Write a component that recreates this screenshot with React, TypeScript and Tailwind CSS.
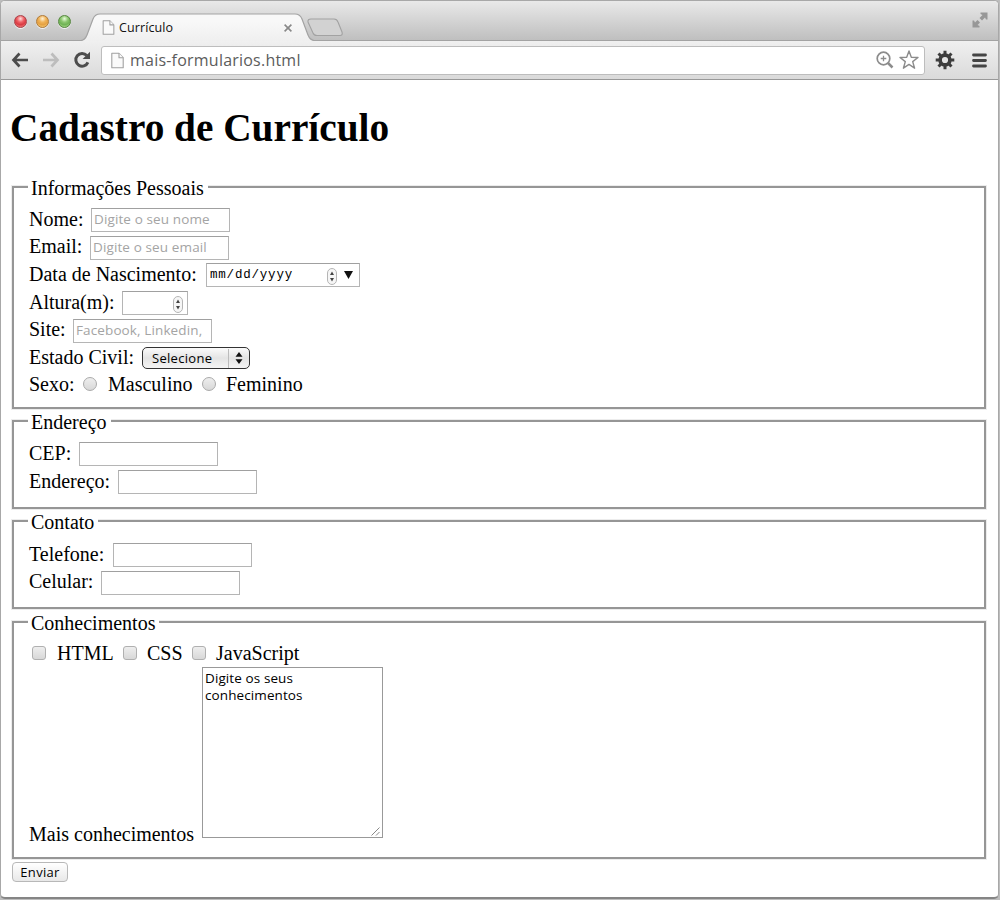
import React from 'react';

const serif = "font-['Liberation_Serif','Times_New_Roman',serif]";
const sans = "font-['Open_Sans','Noto_Sans',sans-serif]";

function PageIcon({ className }: { className: string }) {
  return (
    <svg viewBox="0 0 13 16" className={className} fill="#fafafa" stroke="#a0a0a0" strokeWidth="1.1" strokeLinejoin="round">
      <path d="M.8 .8H8L12.2 5.2V15.2H.8Z" />
      <path d="M8 .8V5.2H12.2" />
    </svg>
  );
}

function Light({ color }: { color: string }) {
  return <div className={`h-[13px] w-[13px] rounded-full border shadow-[0_1px_0_#f4f4f4] ${color}`} />;
}

function TabStrip() {
  return (
    <div className="flex h-[40px] border-b border-[#a3a3a3] bg-linear-to-b from-[#e9e9e9] to-[#bfbfbf] pl-[13px]">
      <div className="flex w-[69px] gap-[9px] pt-[14px]">
        <Light color="border-[#a8434a] bg-[radial-gradient(circle_at_50%_25%,#ffdede_0%,#ee6065_35%,#d93a42_60%,#ff9a94_100%)]" />
        <Light color="border-[#b07a38] bg-[radial-gradient(circle_at_50%_25%,#fff2d8_0%,#f0b45a_35%,#e5a041_60%,#ffe08a_100%)]" />
        <Light color="border-[#56873f] bg-[radial-gradient(circle_at_50%_25%,#eafbdc_0%,#8cc770_35%,#6fb254_60%,#bdee9c_100%)]" />
      </div>
      <div className="relative h-[40px] w-[230px]">
        <svg viewBox="0 1 230 40" className="absolute inset-0 h-[40px] w-[230px] overflow-visible">
          <defs>
            <linearGradient id="tabfill" x1="0" y1="0" x2="0" y2="1">
              <stop offset="0.3" stopColor="#f8f8f8" />
              <stop offset="1" stopColor="#efefef" />
            </linearGradient>
          </defs>
          <path d="M-2 41Q2 40 4 35L10 19Q12 14 17 14H212Q217 14 219 19L225 35Q227 40 231 41Z" fill="url(#tabfill)" />
          <path d="M-2 40.5Q2 40 4 35L10 19Q12 14 17 14H212Q217 14 219 19L225 35Q227 40 231 40.5" fill="none" stroke="#a3a3a3" strokeWidth="1.2" />
        </svg>
        <div className="relative flex h-[40px] items-center pt-[13px] pl-[19px]">
          <PageIcon className="h-[15px] w-[13px]" />
          <span className="ml-[4px] w-[165px] text-[12.5px] leading-[16px] tracking-[0.1px] text-[#111]">Currículo</span>
          <svg viewBox="0 0 8 8" className="h-[8px] w-[8px]" stroke="#888" strokeWidth="1.6">
            <path d="M.6 .6L7.4 7.4M7.4 .6L.6 7.4" />
          </svg>
        </div>
      </div>
      <svg viewBox="0 0 38 20" className="mt-[17px] ml-[-6px] h-[20px] w-[38px]">
        <path d="M4 1H27Q30 1 31 4L35 14Q36 17.5 33 17.5H10Q7 17.5 6 15L1 4Q.5 1 4 1Z" fill="#d2d2d2" stroke="#a2a2a2" strokeWidth="1.1" />
      </svg>
      <svg viewBox="0 0 16 16" className="mt-[11px] mr-[10px] ml-auto h-[16px] w-[16px]" fill="#979797">
        <path d="M8.5 .5H15.5V7.5H14L13 5.5L10 8.5L7.5 6L10.5 3L8.5 2Z" />
        <path d="M7.5 15.5H.5V8.5H2L3 10.5L5.5 8L8 10.5L5.5 13L7.5 14Z" />
      </svg>
    </div>
  );
}

function Toolbar() {
  return (
    <div className="flex h-[39px] items-center border-b border-[#999] bg-linear-to-b from-[#f0f0f0] to-[#dadada] pl-[10px]">
      <svg viewBox="0 0 18 16" className="h-[16px] w-[18px]" fill="none" stroke="#4c4c4c" strokeWidth="2.7">
        <path d="M17 8H3M8.5 1.5L2.5 8L8.5 14.5" />
      </svg>
      <svg viewBox="0 0 18 16" className="ml-[13px] h-[16px] w-[18px]" fill="none" stroke="#bdbdbd" strokeWidth="2.7">
        <path d="M1 8H15M9.5 1.5L15.5 8L9.5 14.5" />
      </svg>
      <svg viewBox="0 0 18 18" className="ml-[13px] h-[18px] w-[18px]">
        <path d="M13.8 4.6A6.3 6.3 0 1 0 14.9 11.3" fill="none" stroke="#4c4c4c" strokeWidth="3" />
        <path d="M17 .8V8H9.6Z" fill="#4c4c4c" />
      </svg>
      <div className="ml-[10px] flex h-[29px] w-[824px] items-center rounded-[3px] border border-[#bdbdbd] bg-white pl-[9px]">
        <PageIcon className="h-[17px] w-[13px]" />
        <span className="ml-[6px] text-[16px] leading-[20px] tracking-[0.22px] text-[#5c5c5c]">mais-formularios.html</span>
        <svg viewBox="0 0 18 18" className="mr-[5px] ml-auto h-[18px] w-[18px]" fill="none" stroke="#8c8c8c">
          <circle cx="7.5" cy="7.5" r="6.3" strokeWidth="1.7" />
          <path d="M7.5 4.7V10.3M4.7 7.5H10.3" strokeWidth="1.3" />
          <path d="M12 12L16.5 16.5" strokeWidth="2.5" />
        </svg>
        <svg viewBox="0 0 20 20" className="mr-[5px] h-[20px] w-[20px]" fill="none" stroke="#8c8c8c" strokeWidth="1.4" strokeLinejoin="round">
          <path d="M10 1L12.3 7.3L19 7.5L13.7 11.6L15.6 18.2L10 14.4L4.4 18.2L6.3 11.6L1 7.5L7.7 7.3Z" />
        </svg>
      </div>
      <svg viewBox="-10 -10 20 20" className="ml-[10px] h-[20px] w-[20px]" fill="#3d3d3d">
        <g stroke="#3d3d3d" strokeWidth="3">
          <path d="M0 -9.3V-5M0 5V9.3M-9.3 0H-5M5 0H9.3M-6.5 -6.5L-4 -4M4 4L6.5 6.5M6.5 -6.5L4 -4M-4 4L-6.5 6.5" />
        </g>
        <circle r="4.9" fill="none" stroke="#3d3d3d" strokeWidth="3.6" />
      </svg>
      <svg viewBox="0 0 15 15" className="ml-[17px] h-[15px] w-[15px]" fill="none" stroke="#444" strokeWidth="2.8" strokeLinecap="round">
        <path d="M1.5 2H13.5M1.5 7.5H13.5M1.5 13H13.5" />
      </svg>
    </div>
  );
}

function Group({ title, width, className, children }: { title: string; width: string; className: string; children: React.ReactNode }) {
  return (
    <fieldset className={`w-[974px] min-w-0 border-2 border-[#969696] pl-[14px] shadow-[0_0_0_1px_#ececec] ${className}`}>
      <legend className={`h-[22px] bg-white pt-px pl-[3px] leading-[22px] whitespace-nowrap ${width}`}>{title}</legend>
      {children}
    </fieldset>
  );
}

function Row({ label, width, className = 'h-[28px] leading-[22px]', children }: { label: string; width: string; className?: string; children: React.ReactNode }) {
  return (
    <div className={`flex items-start ${className}`}>
      <label className={`shrink-0 whitespace-nowrap ${width}`}>{label}</label>
      {children}
    </div>
  );
}

const box = 'border border-[#b5b5b5] border-t-[#a0a0a0] bg-white';

function Field({ placeholder }: { placeholder?: string }) {
  return (
    <input
      placeholder={placeholder}
      className={`h-[24px] w-[139px] px-[2px] pb-[2px] text-[13.5px] font-medium tracking-[0.12px] placeholder:text-[#a4a4a4] ${sans} ${box}`}
    />
  );
}

function Stepper() {
  return (
    <svg viewBox="0 0 10 17" className="mt-[2px] h-[17px] w-[10px]">
      <rect x=".5" y=".5" width="9" height="16" rx="4.5" fill="#f6f6f6" stroke="#b5b5b5" />
      <path d="M5 3.5L7 7H3ZM5 13.5L7 10H3Z" fill="#444" />
    </svg>
  );
}

function Radio() {
  return <span className="mt-[3px] h-[14px] w-[14px] rounded-full border border-[#aaa] bg-linear-to-b from-[#eee] to-[#d8d8d8]" />;
}

function Check() {
  return <span className="mt-[4px] h-[14px] w-[14px] rounded-[3px] border border-[#b0b0b0] bg-linear-to-b from-[#eee] to-[#d8d8d8]" />;
}

export default function App() {
  return (
    <div className={`h-[900px] w-[1000px] overflow-hidden bg-[#bdbdbd] ${sans}`}>
      <div className="h-[899px] w-[999px] overflow-hidden rounded-[5px] border border-[#a8a8a8] border-b-2 border-b-[#858585] bg-white">
        <TabStrip />
        <Toolbar />
        <main className={`pl-[11px] text-[20px] text-black ${serif}`}>
          <h1 className="ml-[-2px] h-[96px] pt-[24px] text-[39.3px] leading-[48px] font-bold whitespace-nowrap">Cadastro de Currículo</h1>
          <Group title="Informações Pessoais" width="w-[180px]" className="h-[233px]">
            <div className="flex flex-col pt-[10px] pl-[1px]">
              <Row label="Nome:" width="w-[62px]"><Field placeholder="Digite o seu nome" /></Row>
              <Row label="Email:" width="w-[61px]" className="h-[27px] leading-[20px]"><Field placeholder="Digite o seu email" /></Row>
              <Row label="Data de Nascimento:" width="w-[177px]">
                <div className={`flex h-[24px] w-[154px] items-center pl-[3px] ${box}`}>
                  <span className="w-[117px] font-['Liberation_Mono',monospace] text-[12.5px] leading-[20px] tracking-[0.8px]">mm/dd/yyyy</span>
                  <Stepper />
                  <svg viewBox="0 0 9 8" className="ml-[7px] h-[8px] w-[9px]"><path d="M0 0H9L4.5 8Z" fill="#111" /></svg>
                </div>
              </Row>
              <Row label="Altura(m):" width="w-[93px]">
                <div className={`flex h-[24px] w-[66px] items-center justify-end pr-[4px] ${box}`}><Stepper /></div>
              </Row>
              <Row label="Site:" width="w-[44px]" className="h-[28px] leading-[20px]"><Field placeholder="Facebook, Linkedin," /></Row>
              <Row label="Estado Civil:" width="w-[113px]" className="h-[27px] leading-[20px]">
                <div className={`flex h-[22px] w-[108px] items-center rounded-[5px] border-[1.5px] border-[#333] bg-linear-to-b from-[#fbfbfb] via-[#e4e4e4] to-[#f4f4f4] pl-[9px] text-[13px] tracking-[0.3px] ${sans}`}>
                  <span className="w-[76px] pb-px leading-[18px]">Selecione</span>
                  <span className="h-[19px] w-px bg-[#bbb]" />
                  <svg viewBox="0 0 8 12" className="ml-[6px] h-[12px] w-[8px]"><path d="M4 0L7.5 4.8H.5ZM4 12L7.5 7.2H.5Z" fill="#111" /></svg>
                </div>
              </Row>
              <Row label="Sexo:" width="w-[54px]" className="h-[28px] leading-[20px]">
                <Radio />
                <span className="ml-[11px] w-[94px]">Masculino</span>
                <Radio />
                <span className="ml-[10px]">Feminino</span>
              </Row>
            </div>
          </Group>
          <Group title="Endereço" width="w-[83px]" className="mt-px h-[99px]">
            <div className="flex flex-col pt-[10px] pl-[1px]">
              <Row label="CEP:" width="w-[50px]"><Field /></Row>
              <Row label="Endereço:" width="w-[89px]"><Field /></Row>
            </div>
          </Group>
          <Group title="Contato" width="w-[70px]" className="mt-px h-[99px]">
            <div className="flex flex-col pt-[11px] pl-[1px]">
              <Row label="Telefone:" width="w-[84px]"><Field /></Row>
              <Row label="Celular:" width="w-[72px]" className="h-[28px] leading-[20px]"><Field /></Row>
            </div>
          </Group>
          <Group title="Conhecimentos" width="w-[131px]" className="mt-[2px] h-[248px]">
            <div className="flex h-[34px] items-start pt-[9px] pl-[4px] leading-[22px]">
              <Check /><span className="ml-[11px] w-[66px]">HTML</span>
              <Check /><span className="ml-[10px] w-[45px]">CSS</span>
              <Check /><span className="ml-[10px]">JavaScript</span>
            </div>
            <div className="flex h-[171px] items-end pl-[1px]">
              <span className="mb-[-7px] w-[173px] leading-[22px] whitespace-nowrap">Mais conhecimentos</span>
              <div className={`flex h-[171px] w-[181px] flex-col justify-between border border-[#999] px-[2px] pt-[2px] text-[13.5px] leading-[16.5px] tracking-[0.1px] ${sans}`}>
                <p>Digite os seus<br />conhecimentos</p>
                <svg viewBox="0 0 9 9" className="mb-[1px] ml-auto h-[9px] w-[9px]" stroke="#888"><path d="M.5 8.5L8.5 .5M5 8.5L8.5 5" /></svg>
              </div>
            </div>
          </Group>
          <button className={`mt-[3px] block h-[20px] w-[56px] rounded-[4px] border border-[#b8b8b8] bg-linear-to-b from-white to-[#e8e8e8] text-[13px] leading-[18px] tracking-[0.3px] ${sans}`}>Enviar</button>
        </main>
      </div>
    </div>
  );
}
